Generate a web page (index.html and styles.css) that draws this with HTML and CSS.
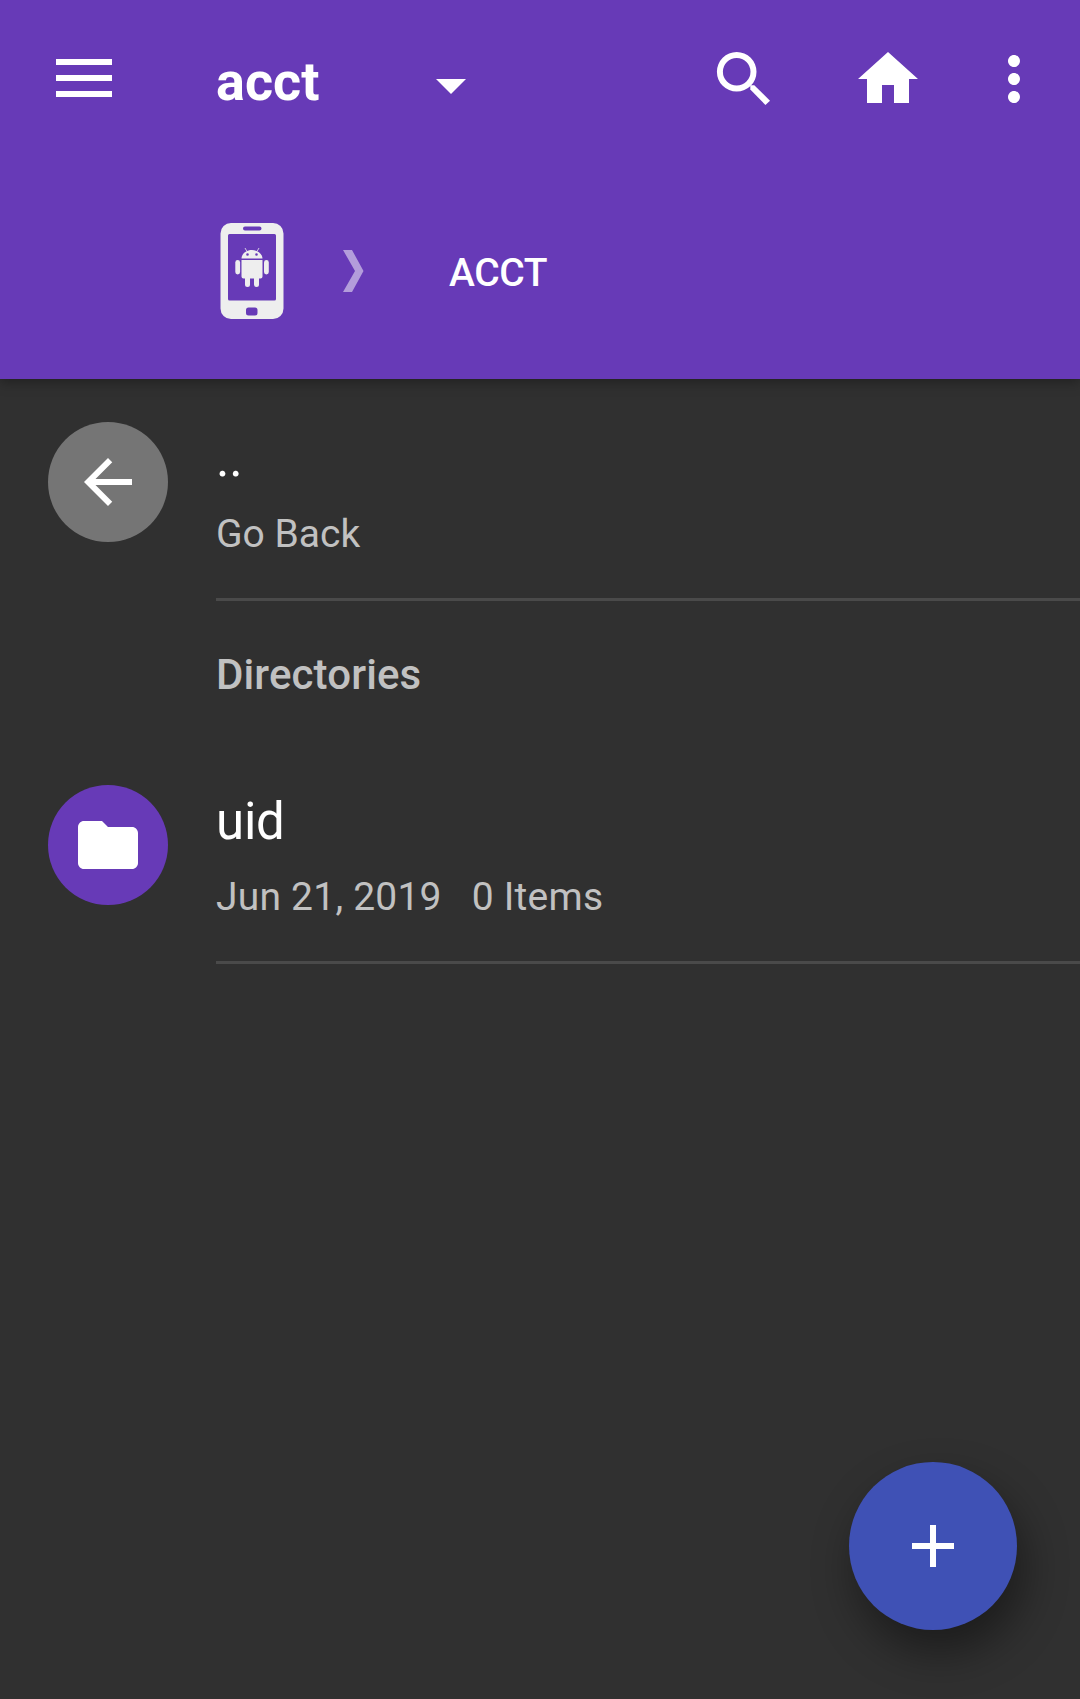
FILE: index.html
```html
<!DOCTYPE html>
<html lang="en">
<head>
<meta charset="utf-8">
<title>acct</title>
<link rel="stylesheet" href="styles.css">
</head>
<body>
<div class="app">
  <header class="header">
    <div class="toolbar">
      <svg class="menu" viewBox="0 0 56 38"><path d="M0 0h56v6H0zM0 16h56v6H0zM0 32h56v6H0z"/></svg>
      <h1 class="title">acct</h1>
      <svg class="caret" viewBox="0 0 30 15"><path d="M0 0h30L15 15z"/></svg>
      <div class="actions">
        <svg class="icon" viewBox="0 0 72 72"><path fill-rule="evenodd" d="M28.700 9a19.800 19.800 0 1 1 0 39.600 19.800 19.800 0 0 1 0-39.600zm0 6a13.800 13.800 0 1 0 0 27.600 13.800 13.800 0 0 0 0-27.600z"/><path d="M42.300 42.300h4L62 57.700 57.400 62 42.300 46.500z"/></svg>
        <svg class="icon" viewBox="0 0 24 24"><path d="M10 20v-6h4v6h5v-8h3L12 3 2 12h3v8z"/></svg>
        <svg class="icon more" viewBox="0 0 24 24"><path d="M12 8c1.1 0 2-.9 2-2s-.9-2-2-2-2 .9-2 2 .9 2 2 2zm0 2c-1.1 0-2 .9-2 2s.9 2 2 2 2-.9 2-2-.9-2-2-2zm0 6c-1.1 0-2 .9-2 2s.9 2 2 2 2-.9 2-2-.9-2-2-2z"/></svg>
      </div>
    </div>
    <nav class="breadcrumbs">
      <svg class="phone" viewBox="0 0 64 96">
        <path fill-rule="evenodd" d="M11 0h42a10.500 10.500 0 0 1 10.500 10.500v75a10.500 10.500 0 0 1-10.500 10.500H11A10.500 10.500 0 0 1 .5 85.500v-75A10.500 10.500 0 0 1 11 0zM9.500 11a1.500 1.500 0 0 0-1.500 1.500V76a1.500 1.500 0 0 0 1.500 1.500h45A1.500 1.500 0 0 0 56 76V12.500a1.500 1.500 0 0 0-1.500-1.500zM25 3.500a2 2 0 0 0 0 4h14.500a2 2 0 0 0 0-4zM28.500 84.500a2.500 2.500 0 0 0-2.500 2.500v3a2.500 2.500 0 0 0 2.500 2.500h6.500a2.500 2.500 0 0 0 2.500-2.500v-3a2.500 2.500 0 0 0-2.500-2.500z"/>
        <path fill-rule="evenodd" d="M21.500 35.500c.3-4.800 4.700-8.500 10.500-8.500s10.200 3.700 10.500 8.500zM27.500 30.200a1.300 1.300 0 1 0 0 2.600 1.300 1.300 0 0 0 0-2.600zM36.500 30.200a1.300 1.300 0 1 0 0 2.600 1.300 1.300 0 0 0 0-2.600z"/>
        <path d="M21.500 37h21v16.500a2 2 0 0 1-2 2H39v6a2.500 2.500 0 0 1-5 0v-6h-4v6a2.500 2.500 0 0 1-5 0v-6h-1.500a2 2 0 0 1-2-2z"/>
        <rect x="15.300" y="37" width="4.800" height="14.500" rx="2.400"/>
        <rect x="44" y="37" width="4.800" height="14.500" rx="2.400"/>
        <path class="antenna" d="M25 25l2 3.500M39 25l-2 3.500"/>
      </svg>
      <svg class="chevron" viewBox="0 0 21 42"><path d="M0 0h9l11.500 21L9 42H0l12-21z"/></svg>
      <span class="crumb">ACCT</span>
    </nav>
  </header>
  <main class="list">
    <div class="row">
      <span class="badge back"><svg class="icon" viewBox="0 0 24 24"><path d="M20 11H7.830l5.590-5.590L12 4l-8 8 8 8 1.410-1.410L7.830 13H20v-2z"/></svg></span>
      <div class="body">
        <div class="name">..</div>
        <div class="meta"><span>Go Back</span></div>
      </div>
    </div>
    <h2 class="section">Directories</h2>
    <div class="row">
      <span class="badge folder"><svg class="icon" viewBox="0 0 24 24"><path d="M10 4H4c-1.100 0-1.990.9-1.990 2L2 18c0 1.100.9 2 2 2h16c1.100 0 2-.9 2-2V8c0-1.100-.9-2-2-2h-8l-2-2z"/></svg></span>
      <div class="body">
        <div class="name">uid</div>
        <div class="meta details"><span>Jun 21, 2019</span><span>0 Items</span></div>
      </div>
    </div>
  </main>
  <button class="fab" aria-label="Add"><svg class="icon" viewBox="0 0 24 24"><path d="M19 13h-6v6h-2v-6H5v-2h6V5h2v6h6z"/></svg></button>
</div>
</body>
</html>
```
FILE: styles.css
```css
* { box-sizing: border-box; }
body { margin: 0; background: #303030; font-family: Roboto, sans-serif; color: #fff; }
.app { position: relative; height: 1699px; overflow: hidden; }
svg { display: block; flex: none; fill: #fff; }
.icon { width: 72px; height: 72px; }

.header {
  position: relative;
  height: 379px;
  background: #673ab7;
  box-shadow: 0 3px 12px rgba(0, 0, 0, .35);
}
.toolbar { display: flex; align-items: center; height: 158px; padding: 0 30px 0 56px; }
.menu { width: 56px; height: 38px; margin-bottom: 2px; }
.title { width: 220px; margin: 6px 0 0 104px; font-size: 54px; line-height: 64px; font-weight: 700; }
.caret { width: 30px; height: 15px; margin-top: 15px; }
.actions { display: flex; gap: 72px; margin-left: auto; }
.more { margin-left: -18px; }

.breadcrumbs { display: flex; align-items: center; height: 226px; padding: 0 0 0 220px; }
.phone { width: 64px; height: 96px; fill: #eee; }
.antenna { stroke: #eee; stroke-width: .8; }
.chevron { width: 21px; height: 42px; margin-left: 59px; fill: #b39ddb; }
.crumb { margin: 4px 0 0 85px; font-size: 39px; line-height: 46px; font-weight: 500; letter-spacing: -.4px; }

.row { display: flex; height: 222px; padding-left: 48px; }
.badge {
  display: flex; align-items: center; justify-content: center;
  width: 120px; height: 120px; margin-top: 43px; border-radius: 50%;
}
.back { background: #757575; }
.folder { background: #673ab7; }
.body { flex: 1; margin-left: 48px; padding-top: 47px; border-bottom: 3px solid #4a4a4a; }
.name { font-size: 51px; line-height: 66px; letter-spacing: -.2px; }
.meta { display: flex; gap: 30px; margin-top: 19px; font-size: 39px; line-height: 46px; color: #c1c1c1; }
.details { letter-spacing: .22px; }
.section { height: 141px; margin: 0; padding: 49px 0 0 216px; font-size: 42px; line-height: 50px; font-weight: 500; letter-spacing: .12px; color: #c1c1c1; }

.fab {
  position: absolute; right: 63px; bottom: 69px;
  display: flex; align-items: center; justify-content: center;
  width: 168px; height: 168px; padding: 0; border: 0; border-radius: 50%;
  background: #3f51b5;
  box-shadow: 7px 22px 44px rgba(0, 0, 0, .42);
}
```
